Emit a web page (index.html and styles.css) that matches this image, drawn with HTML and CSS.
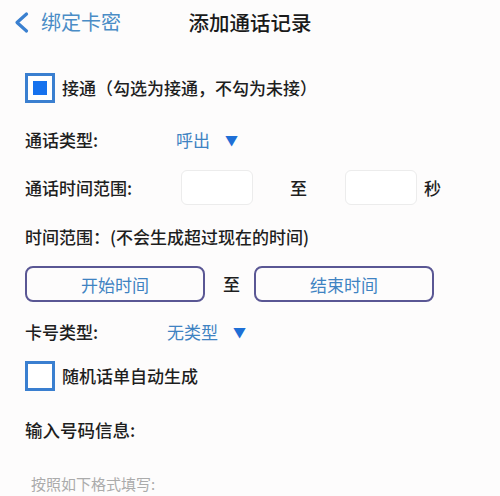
FILE: index.html
```html
<!DOCTYPE html>
<html lang="zh">
<head>
<meta charset="utf-8">
<link rel="stylesheet" href="styles.css">
</head>
<body>
<div class="header">
  <div class="back">
    <svg class="chev" width="16" height="24" viewBox="0 0 16 24"><path d="M12.5 3 L3 11.5 L12.5 20" fill="none" stroke="#3a80d0" stroke-width="3.2" stroke-linecap="round" stroke-linejoin="round"/></svg>
    <span class="back-text">绑定卡密</span>
  </div>
  <div class="title">添加通话记录</div>
  <div></div>
</div>
<div class="content">
  <div class="row r1">
    <span class="check checked"><span class="dot"></span></span>
    <span class="label">接通（勾选为接通，不勾为未接）</span>
  </div>
  <div class="row r2">
    <span class="label w151">通话类型:</span>
    <span class="value">呼出</span>
    <span class="tri">▼</span>
  </div>
  <div class="row r3">
    <span class="label w156">通话时间范围:</span>
    <span class="box"></span>
    <span class="label to">至</span>
    <span class="box"></span>
    <span class="label sec">秒</span>
  </div>
  <div class="row r4">
    <span class="label">时间范围：(不会生成超过现在的时间)</span>
  </div>
  <div class="row r5">
    <span class="btn">开始时间</span>
    <span class="label to2">至</span>
    <span class="btn">结束时间</span>
  </div>
  <div class="row r6">
    <span class="label w142">卡号类型:</span>
    <span class="value">无类型</span>
    <span class="tri">▼</span>
  </div>
  <div class="row r7">
    <span class="check"></span>
    <span class="label">随机话单自动生成</span>
  </div>
  <div class="row r8">
    <span class="label big">输入号码信息:</span>
  </div>
  <div class="placeholder">
    <div>按照如下格式填写:</div>
    <div>通话号码（格式）</div>
  </div>
</div>
</body>
</html>
```
FILE: styles.css
```css
html, body {
  margin: 0;
  padding: 0;
  background: #fdfcfc;
  font-family: "Noto Sans CJK SC", "Noto Sans", sans-serif;
  color: #1e1e1e;
}
.header {
  height: 44px;
  display: grid;
  grid-template-columns: 1fr auto 1fr;
  align-items: center;
}
.back {
  display: flex;
  align-items: center;
  padding-left: 14px;
}
.chev {
  display: block;
  margin-top: 1px;
}
.back-text {
  margin-left: 11px;
  font-size: 20px;
  color: #4a8cc6;
  line-height: 24px;
}
.title {
  font-size: 20.5px;
  color: #1a1a1a;
  line-height: 24px;
  font-weight: 500;
}
.content {
  padding-left: 25px;
}
.row {
  display: flex;
  align-items: center;
  height: 30px;
}
.label {
  font-size: 17px;
  line-height: 24px;
  font-weight: 500;
  color: #1e1e1e;
  white-space: nowrap;
}
.r1 { margin-top: 29px; }
.r2 { margin-top: 22px; }
.r3 { margin-top: 15px; height: 35px; }
.r4 { margin-top: 17px; }
.r5 { margin-top: 14px; height: 36px; }
.r6 { margin-top: 15px; }
.r7 { margin-top: 14px; }
.r8 { margin-top: 24px; }
.check {
  box-sizing: border-box;
  width: 30px;
  height: 30px;
  border: 3px solid #3a7fd0;
  margin-right: 7px;
  display: flex;
  align-items: center;
  justify-content: center;
  background: #fff;
}
.dot {
  width: 14px;
  height: 14px;
  background: #1672ee;
}
.w151 { width: 151px; }
.w156 { width: 156px; }
.w142 { width: 142px; }
.value {
  font-size: 17px;
  line-height: 24px;
  color: #3f83c2;
}
.tri {
  margin-left: 15px;
  font-size: 13px;
  color: #1e6fd6;
  line-height: 24px;
}
.box {
  box-sizing: border-box;
  width: 72px;
  height: 35px;
  border: 1px solid #ececec;
  border-radius: 6px;
  background: #fff;
}
.to { margin: 0 38px 0 37px; }
.sec { margin-left: 7px; }
.btn {
  box-sizing: border-box;
  width: 180px;
  height: 36px;
  border: 2px solid #5a5794;
  border-radius: 8px;
  display: flex;
  align-items: center;
  justify-content: center;
  font-size: 17px;
  color: #3f83c2;
}
.to2 { margin: 0 14px 0 18px; }
.big { font-size: 17.5px; }
.placeholder {
  margin-top: 29px;
  padding-left: 6px;
  font-size: 15px;
  line-height: 19px;
  color: #ababab;
}
```
